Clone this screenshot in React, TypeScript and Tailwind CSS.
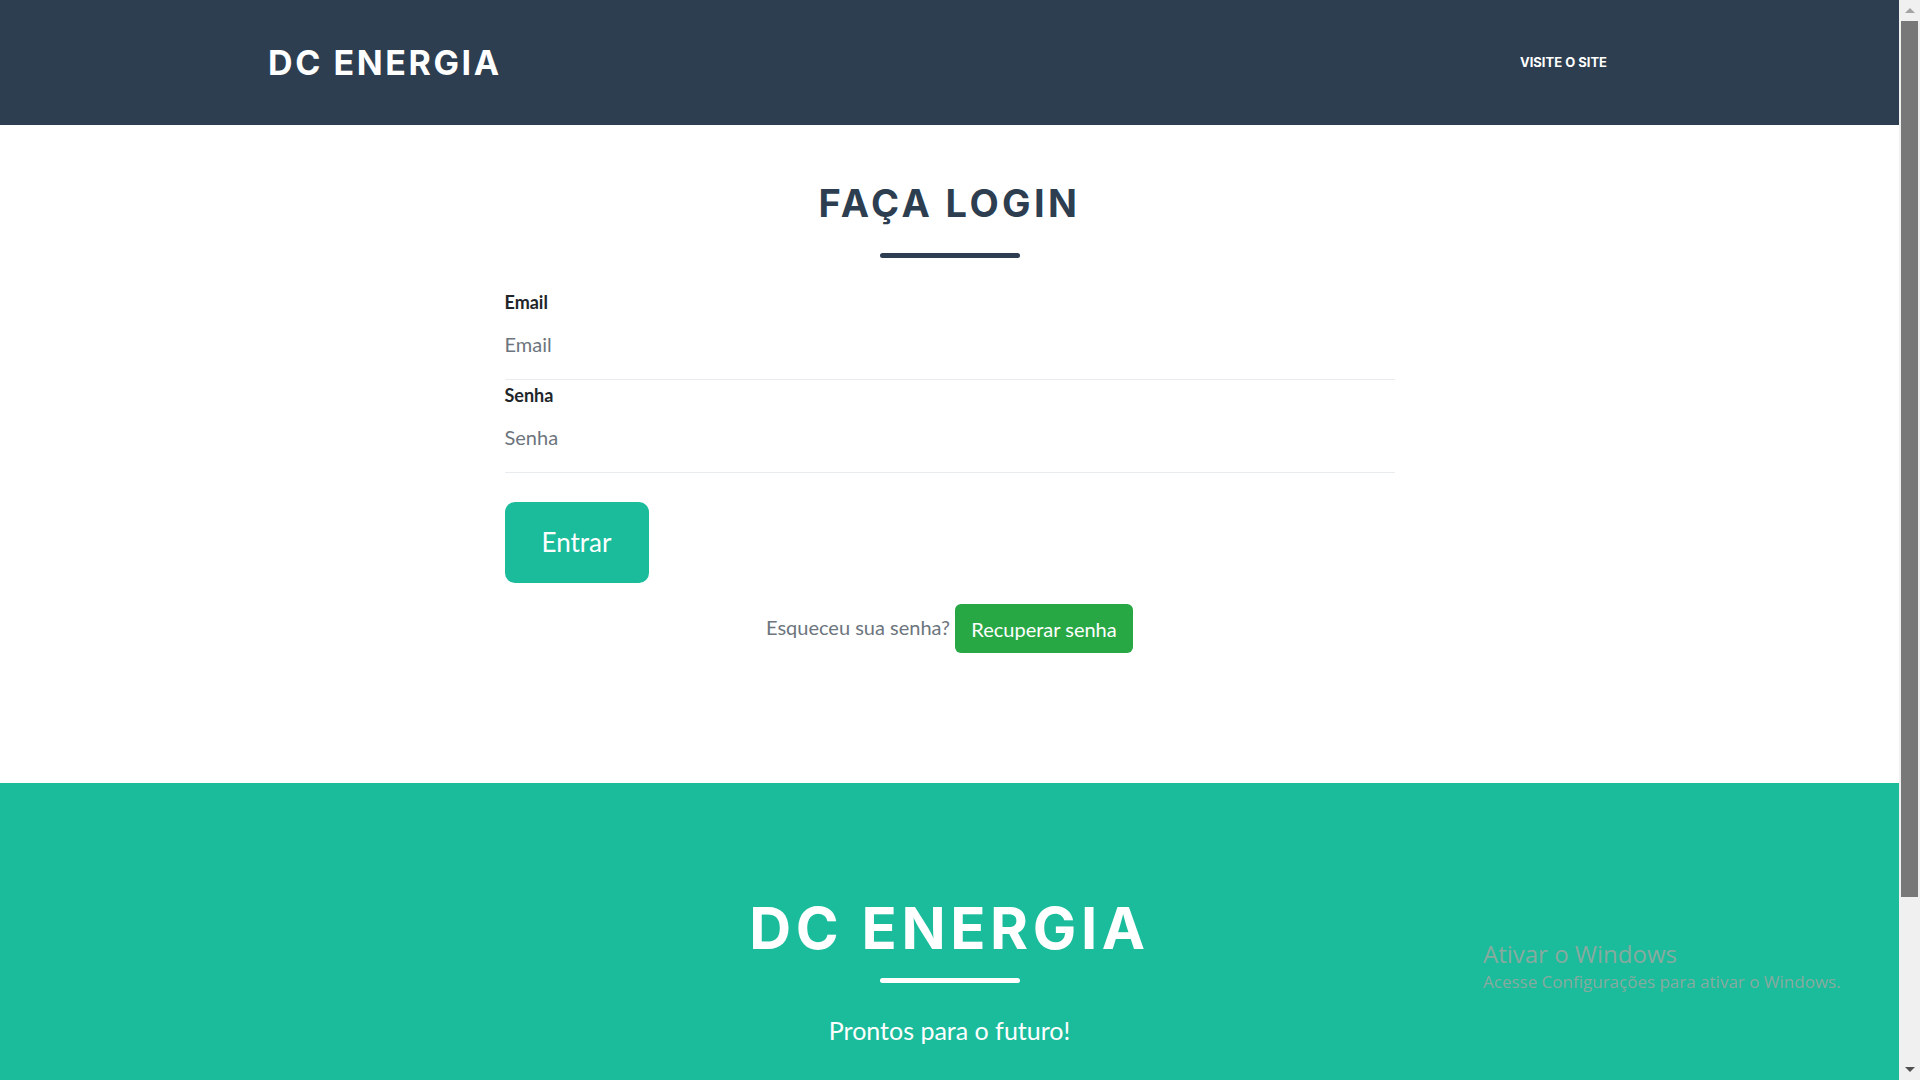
import { useState } from "react";

const heading = "font-['Inter','Liberation_Sans',sans-serif] font-bold";
const body = "font-['Lato','Liberation_Sans',sans-serif]";

const Field = ({ label, type }: { label: string; type: string }) => (
  <div className="pt-[2px] pb-[20px] border-b border-[#e9ecef]">
    <label className={`${body} block text-[18px] leading-[27px] font-bold text-[#212529]`}>{label}</label>
    <input
      type={type}
      placeholder={label}
      className={`${body} mt-[13px] block w-full h-[30px] text-[20px] leading-[30px] text-[#495057] placeholder:text-[#6c757d] outline-none bg-transparent`}
    />
  </div>
);

const Scrollbar = () => (
  <div className="w-[21px] h-[1080px] bg-[#f0f0f0] flex flex-col items-center shrink-0">
    <div className="h-[21px] flex items-center justify-center">
      <div className="w-0 h-0 border-l-[5px] border-r-[5px] border-b-[5px] border-l-transparent border-r-transparent border-b-[#a3a3a3]" />
    </div>
    <div className="w-[17px] h-[876px] bg-[#787878]" />
    <div className="flex-1" />
    <div className="h-[21px] flex items-center justify-center">
      <div className="w-0 h-0 border-l-[5px] border-r-[5px] border-t-[5px] border-l-transparent border-r-transparent border-t-[#505050]" />
    </div>
  </div>
);

export default function App() {
  const [email, setEmail] = useState("");

  return (
    <div className="relative flex w-[1920px] h-[1080px] overflow-hidden bg-white">
      <div className="flex-1 flex flex-col">
        {/* Navbar */}
        <header className="h-[125px] bg-[#2c3e50] flex items-center justify-between pl-[268px] pr-[292px]">
          <a className={`${heading} text-white text-[34px] leading-none tracking-[2.6px]`}>DC ENERGIA</a>
          <a className={`${heading} text-white text-[13px] leading-none`}>VISITE O SITE</a>
        </header>

        {/* Login */}
        <section className="h-[658px] pt-[60px] flex flex-col items-center">
          <h2 className={`${heading} text-[#2c3e50] text-[38px] leading-[37px] tracking-[3.4px]`}>FAÇA LOGIN</h2>
          <div className="mt-[31px] w-[140px] h-[5px] rounded-full bg-[#2c3e50]" />

          <form className="mt-[29px] w-[890px]" onSubmit={e => e.preventDefault()}>
            <Field label="Email" type="email" />
            <Field label="Senha" type="password" />
            <button
              type="submit"
              className={`${body} mt-[29px] w-[144px] h-[81px] rounded-[10px] bg-[#1abc9c] text-white text-[26px] flex items-center justify-center`}
            >
              Entrar
            </button>
          </form>

          <div className="mt-[21px] flex items-center gap-[5px]">
            <span className={`${body} text-[20px] text-[#6c757d] -mt-[3px]`}>Esqueceu sua senha?</span>
            <button className={`${body} w-[178px] h-[49px] rounded-[6px] bg-[#28a745] text-white text-[20px]`}>
              Recuperar senha
            </button>
          </div>
        </section>

        {/* Footer band */}
        <section className="flex-1 bg-[#1abc9c] pt-[116px] flex flex-col items-center">
          <h1 className={`${heading} text-white text-[58px] leading-[58px] tracking-[4.6px]`}>DC ENERGIA</h1>
          <div className="mt-[21px] w-[140px] h-[5px] rounded-full bg-white" />
          <p className={`${body} mt-[29px] text-white text-[25px] leading-[37px]`}>Prontos para o futuro!</p>
        </section>
      </div>

      <Scrollbar />

      {/* Windows activation watermark */}
      <div className="absolute left-[1483px] top-[937px] font-['Open_Sans','Noto_Sans',sans-serif] text-[#88aa9f] pointer-events-none">
        <p className="text-[24px] leading-[33px]">Ativar o Windows</p>
        <p className="text-[17px] leading-[24px]">Acesse Configurações para ativar o Windows.</p>
      </div>
      <input type="hidden" value={email} onChange={e => setEmail(e.target.value)} />
    </div>
  );
}
